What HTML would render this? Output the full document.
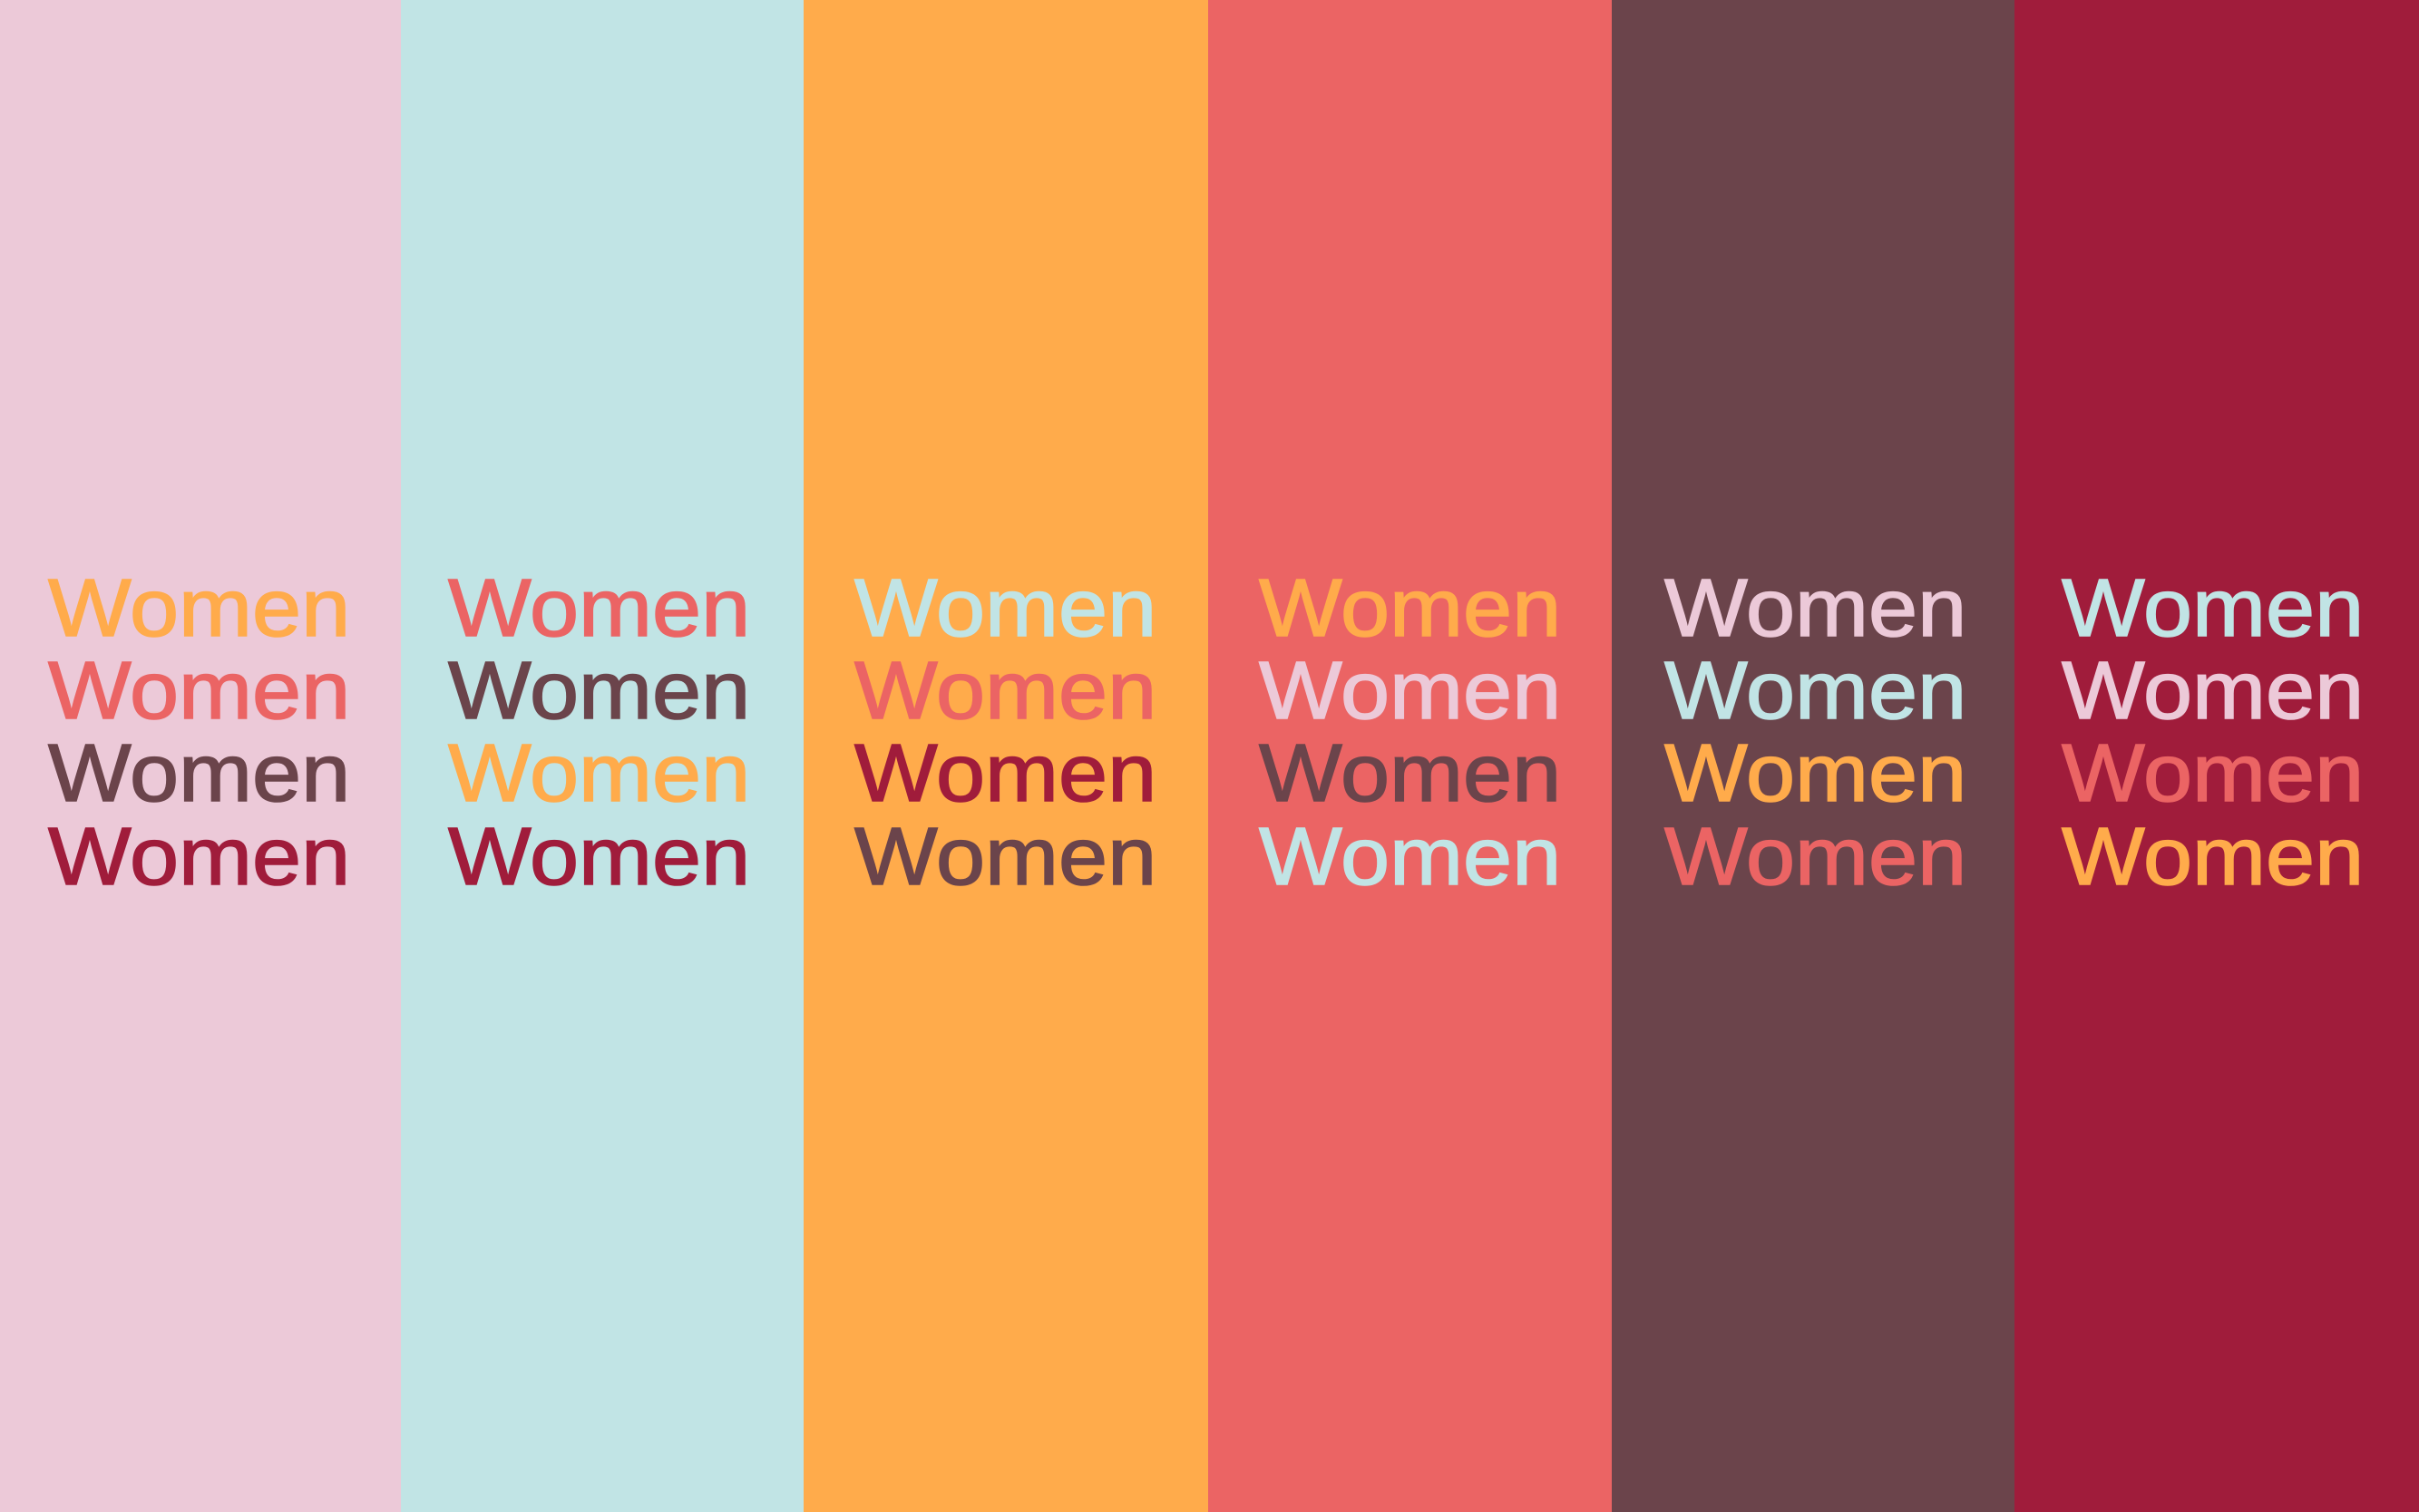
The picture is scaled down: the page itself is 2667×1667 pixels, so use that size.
<!DOCTYPE html>
<html><head><meta charset="utf-8"><style>
html,body{margin:0;padding:0;width:2667px;height:1667px;overflow:hidden}
.c{position:absolute;top:0;height:1667px}
.t{position:absolute;font-family:"Liberation Sans",sans-serif;font-size:90px;line-height:90px;white-space:nowrap;transform:scaleX(1.08);transform-origin:0 0;-webkit-text-stroke:1.5px currentColor}
</style></head><body>
<div class="c" style="left:0;width:442px;background:#ecc9d8"></div>
<div class="c" style="left:442px;width:444px;background:#c1e4e5"></div>
<div class="c" style="left:886px;width:446px;background:#ffab4b"></div>
<div class="c" style="left:1332px;width:445px;background:#eb6464"></div>
<div class="c" style="left:1777px;width:444px;background:#6b444b"></div>
<div class="c" style="left:2221px;width:446px;background:#a01c3b"></div>

<div class="t" style="left:53px;top:626px;color:#ffab4b">Women</div>
<div class="t" style="left:53px;top:717px;color:#eb6464">Women</div>
<div class="t" style="left:53px;top:808px;color:#6b444b">Women</div>
<div class="t" style="left:53px;top:900px;color:#a01c3b">Women</div>

<div class="t" style="left:494px;top:626px;color:#eb6464">Women</div>
<div class="t" style="left:494px;top:717px;color:#6b444b">Women</div>
<div class="t" style="left:494px;top:808px;color:#ffab4b">Women</div>
<div class="t" style="left:494px;top:900px;color:#a01c3b">Women</div>

<div class="t" style="left:942px;top:626px;color:#c1e4e5">Women</div>
<div class="t" style="left:942px;top:717px;color:#eb6464">Women</div>
<div class="t" style="left:942px;top:808px;color:#a01c3b">Women</div>
<div class="t" style="left:942px;top:900px;color:#6b444b">Women</div>

<div class="t" style="left:1388px;top:626px;color:#ffab4b">Women</div>
<div class="t" style="left:1388px;top:717px;color:#ecc9d8">Women</div>
<div class="t" style="left:1388px;top:808px;color:#6b444b">Women</div>
<div class="t" style="left:1388px;top:900px;color:#c1e4e5">Women</div>

<div class="t" style="left:1835px;top:626px;color:#ecc9d8">Women</div>
<div class="t" style="left:1835px;top:717px;color:#c1e4e5">Women</div>
<div class="t" style="left:1835px;top:808px;color:#ffab4b">Women</div>
<div class="t" style="left:1835px;top:900px;color:#eb6464">Women</div>

<div class="t" style="left:2273px;top:626px;color:#c1e4e5">Women</div>
<div class="t" style="left:2273px;top:717px;color:#ecc9d8">Women</div>
<div class="t" style="left:2273px;top:808px;color:#eb6464">Women</div>
<div class="t" style="left:2273px;top:900px;color:#ffab4b">Women</div>
</body></html>
